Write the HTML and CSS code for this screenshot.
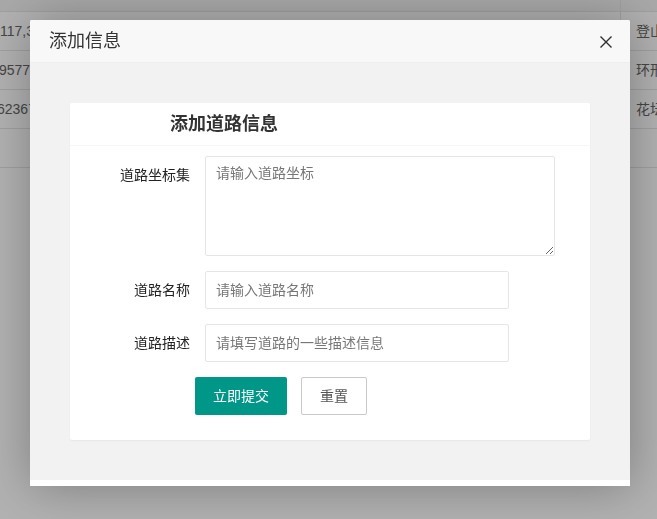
FILE: index.html
```html
<!DOCTYPE html>
<html lang="zh-CN">
<head>
<meta charset="utf-8">
<title>添加信息</title>
<link rel="stylesheet" href="styles.css">
</head>
<body>
<div class="table">
  <div class="row head"><div class="cell c1"></div><div class="cell c2"></div></div>
  <div class="row"><div class="cell c1"><span class="num">117,36</span></div><div class="cell c2">登山道</div></div>
  <div class="row"><div class="cell c1"><span class="num shift">9577,1</span></div><div class="cell c2">环形路</div></div>
  <div class="row"><div class="cell c1"><span class="num shift2">62367,</span></div><div class="cell c2">花坛路</div></div>
  <div class="row"><div class="cell c1"></div><div class="cell c2"></div></div>
</div>
<div class="shade"></div>
<div class="layer">
  <div class="layer-title">添加信息</div>
  <span class="layer-close" aria-label="关闭">
    <svg width="12" height="12" viewBox="0 0 12 12"><path d="M0.5 0.5 L11.5 11.5 M11.5 0.5 L0.5 11.5" stroke="#2f2f2f" stroke-width="1.4" fill="none"/></svg>
  </span>
  <div class="layer-content">
    <div class="card">
      <div class="card-header">添加道路信息</div>
      <div class="card-body">
        <div class="form-item">
          <label class="form-label">道路坐标集</label>
          <textarea class="textarea" placeholder="请输入道路坐标"></textarea>
        </div>
        <div class="form-item">
          <label class="form-label">道路名称</label>
          <input class="input" type="text" placeholder="请输入道路名称">
        </div>
        <div class="form-item">
          <label class="form-label">道路描述</label>
          <input class="input" type="text" placeholder="请填写道路的一些描述信息">
        </div>
        <div class="form-item buttons">
          <button class="btn">立即提交</button>
          <button class="btn btn-primary">重置</button>
        </div>
      </div>
    </div>
  </div>
  <div class="layer-foot"></div>
</div>
</body>
</html>
```

FILE: styles.css
```css
* { box-sizing: border-box; }
html, body {
  margin: 0;
  padding: 0;
  width: 657px;
  height: 519px;
  overflow: hidden;
  background: #fff;
  font-family: "Liberation Sans", "Noto Sans CJK SC", sans-serif;
  font-size: 14px;
  color: #333;
}

/* background table */
.table { width: 657px; }
.row {
  display: flex;
  height: 39px;
  border-bottom: 1px solid #e6e6e6;
}
.row.head { height: 12px; background: #f2f2f2; }
.cell {
  height: 100%;
  line-height: 38px;
  color: #666;
  white-space: nowrap;
  overflow: hidden;
}
.c1 { width: 621px; border-right: 1px solid #e6e6e6; }
.c2 { flex: 1; padding-left: 15px; }
.num { display: inline-block; margin-left: 0; }
.num.shift { margin-left: -1px; }
.num.shift2 { margin-left: -3px; }

.shade {
  position: fixed;
  inset: 0;
  background: rgba(0, 0, 0, 0.3);
}

/* dialog */
.layer {
  position: absolute;
  left: 30px;
  top: 20px;
  width: 600px;
  background: #fff;
  border-radius: 2px;
  box-shadow: 1px 1px 50px rgba(0, 0, 0, 0.3);
}
.layer-title {
  height: 43px;
  line-height: 42px;
  padding: 0 80px 0 19px;
  background: #f8f8f8;
  border-bottom: 1px solid #eee;
  border-radius: 2px 2px 0 0;
  font-size: 18px;
  color: #333;
}
.layer-close {
  position: absolute;
  right: 18px;
  top: 16px;
  width: 12px;
  height: 12px;
  display: block;
}
.layer-close svg { display: block; }
.layer-content {
  background: #f2f2f2;
  padding: 40px;
}
.layer-foot { height: 6px; background: #fff; }

/* card */
.card {
  background: #fff;
  border-radius: 2px;
  box-shadow: 0 1px 2px 0 rgba(0, 0, 0, 0.05);
}
.card-header {
  height: 43px;
  line-height: 42px;
  padding-left: 100px;
  border-bottom: 1px solid #f6f6f6;
  font-size: 18px;
  font-weight: bold;
  color: #333;
}
.card-body { padding: 10px 15px; }

.form-item {
  display: flex;
  align-items: flex-start;
  margin-bottom: 15px;
}
.form-label {
  width: 120px;
  padding: 9px 15px;
  line-height: 20px;
  text-align: right;
  color: #222;
  flex: none;
}
.textarea, .input {
  border: 1px solid #e6e6e6;
  border-radius: 2px;
  background: #fff;
  font-family: inherit;
  font-size: 14px;
  color: #333;
  outline: none;
}
.textarea {
  width: 350px;
  height: 100px;
  padding: 6px 10px;
  line-height: 20px;
  resize: both;
}
.input {
  width: 304px;
  height: 38px;
  padding: 0 10px;
  line-height: 38px;
}
.textarea::placeholder, .input::placeholder { color: #777; }

.buttons { padding-left: 110px; }
.btn {
  height: 38px;
  line-height: 38px;
  padding: 0 18px;
  border: none;
  border-radius: 2px;
  background: #009688;
  color: #fff;
  font-family: inherit;
  font-size: 14px;
  cursor: pointer;
}
.btn-primary {
  margin-left: 14px;
  line-height: 36px;
  border: 1px solid #c9c9c9;
  background: #fff;
  color: #555;
}
```
